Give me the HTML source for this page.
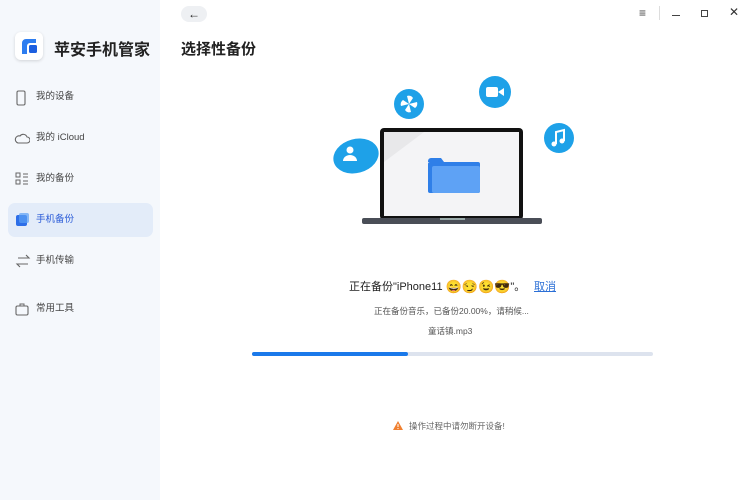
<!DOCTYPE html>
<html><head><meta charset="utf-8"><style>
*{margin:0;padding:0;box-sizing:border-box}
body{width:747px;height:500px;overflow:hidden;background:#fff;font-family:"Liberation Sans","Noto Sans CJK SC",sans-serif;position:relative;color:#222}
.side{position:absolute;left:0;top:0;width:160px;height:500px;background:#f5f8fc}
.logo{position:absolute;left:15px;top:32px;width:28px;height:28px;border-radius:6px;background:#fff;box-shadow:0 1px 3px rgba(0,0,0,.15)}
.app{position:absolute;left:54px;top:36px;font-size:16px;font-weight:bold;color:#222}
.nav{position:absolute;left:8px;width:145px;height:34px;border-radius:7px;font-size:9.5px;color:#444;padding-left:28px;line-height:34px}
.nav svg{position:absolute;left:7px;top:10px}
.sel{background:#e3ecf9;color:#2a5bd8}
.title{position:absolute;left:181px;top:38px;font-size:15px;font-weight:bold}
.back{position:absolute;left:181px;top:6px;width:26px;height:16px;border-radius:8px;background:#eef0f3;text-align:center;font-size:12px;line-height:16px}
.ctl{position:absolute;top:6px;font-size:12px;color:#444}
.emo{font-size:13px;vertical-align:-1px}
</style></head><body>
<div class="side">
<div class="logo"><svg width="28" height="28"><path d="M7 22V11a4 4 0 0 1 4-4h10v4h-6a3 3 0 0 0-3 3v8z" fill="#2d7df0"/><rect x="14" y="13" width="8" height="8" rx="1.5" fill="#1c5fe0"/></svg></div>
<div class="app">苹安手机管家</div>
<div class="nav" style="top:80px"><svg width="12" height="16"><rect x="2" y="1" width="8" height="14" rx="1.5" fill="none" stroke="#666" stroke-width="1.1"/></svg>我的设备</div>
<div class="nav" style="top:121px"><svg width="16" height="14" style="left:6px;top:11px"><path d="M4 11h9a3 3 0 0 0 0-6 4 4 0 0 0-7-1 3.5 3.5 0 0 0-2 7z" fill="none" stroke="#666" stroke-width="1.1"/></svg>我的 iCloud</div>
<div class="nav" style="top:162px"><svg width="14" height="14"><rect x="1" y="1" width="4" height="4" fill="none" stroke="#666"/><rect x="1" y="8" width="4" height="4" fill="none" stroke="#666"/><path d="M8 2h5M8 5h5M8 9h5M8 12h5" stroke="#666"/></svg>我的备份</div>
<div class="nav sel" style="top:203px"><svg width="14" height="14"><rect x="1" y="2" width="11" height="11" rx="2" fill="#2d6ee8"/><rect x="4" y="0" width="10" height="10" rx="2" fill="#5aa0f5" opacity=".7"/></svg>手机备份</div>
<div class="nav" style="top:244px"><svg width="16" height="14"><path d="M3 4h11l-3-3M13 10H2l3 3" fill="none" stroke="#666" stroke-width="1.1"/></svg>手机传输</div>
<div class="nav" style="top:292px"><svg width="14" height="14"><rect x="1" y="4" width="12" height="9" rx="1.5" fill="none" stroke="#666" stroke-width="1.1"/><path d="M5 4V2h4v2" fill="none" stroke="#666"/></svg>常用工具</div>
</div>
<div class="back">←</div>
<div class="title">选择性备份</div>
<div class="ctl" style="left:639px">≡</div>
<div style="position:absolute;left:659px;top:6px;width:1px;height:14px;background:#ddd"></div>
<div style="position:absolute;left:672px;top:15px;width:8px;height:1.3px;background:#444"></div>
<div style="position:absolute;left:701px;top:10px;width:7px;height:7px;border:1.3px solid #444"></div>
<div class="ctl" style="left:729px;top:5px;color:#333">✕</div>
<svg style="position:absolute;left:330px;top:75px" width="250" height="155">
<ellipse cx="26" cy="81" rx="23" ry="17" fill="#1ea1e8" transform="rotate(-15 26 81)"/>
<circle cx="20" cy="75" r="3.5" fill="#fff"/><path d="M13 86a7 6 0 0 1 14 0z" fill="#fff"/>
<circle cx="79" cy="29" r="15" fill="#1ea1e8"/>
<path d="M79 29l-2-8a5 5 0 0 1 6 2zM79 29l8-2a5 5 0 0 1-2 6zM79 29l2 8a5 5 0 0 1-6-2zM79 29l-8 2a5 5 0 0 1 2-6z" fill="#fff"/>
<circle cx="165" cy="17" r="16" fill="#1ea1e8"/>
<rect x="156" y="12" width="12" height="10" rx="2" fill="#fff"/><path d="M168 17l6-4v8z" fill="#fff"/>
<circle cx="229" cy="63" r="15" fill="#1ea1e8"/>
<path d="M226 69V57l8-2v11" fill="none" stroke="#fff" stroke-width="2"/><circle cx="224" cy="69" r="2.5" fill="#fff"/><circle cx="232" cy="66" r="2.5" fill="#fff"/>
<rect x="50" y="53" width="143" height="92" rx="4" fill="#111"/>
<rect x="54" y="57" width="135" height="84" fill="#f4f4f6"/>
<path d="M54 57h40l-40 30z" fill="#e8e8ea"/>
<rect x="32" y="143" width="180" height="6" rx="2" fill="#4a4e57"/>
<rect x="110" y="143" width="25" height="2" fill="#9aa"/>
<path d="M98 86a3 3 0 0 1 3-3h10l3 4h-16z" fill="#2f7fe8"/>
<rect x="98" y="87" width="52" height="31" rx="2" fill="#2f7fe8"/>
<rect x="102" y="91" width="48" height="27" rx="2" fill="#5ea2f5"/>
</svg>
<div style="position:absolute;left:349px;top:278px;font-size:11px;color:#222">正在备份"iPhone11 <span class="emo">😄😏😉😎</span>"。</div>
<div style="position:absolute;left:534px;top:278px;font-size:11px;color:#2b6fd6;text-decoration:underline">取消</div>
<div style="position:absolute;left:374px;top:305px;font-size:8.5px;color:#555">正在备份音乐，已备份20.00%，请稍候...</div>
<div style="position:absolute;left:428px;top:325px;font-size:8.5px;color:#555">童话镇.mp3</div>
<div style="position:absolute;left:252px;top:352px;width:401px;height:4px;border-radius:2px;background:#dde3ee"></div>
<div style="position:absolute;left:252px;top:352px;width:156px;height:4px;border-radius:2px;background:#1a79ea"></div>
<svg style="position:absolute;left:393px;top:421px" width="10" height="9"><path d="M5 0l5 9H0z" fill="#f08030"/><rect x="4.5" y="3" width="1" height="3" fill="#fff"/><rect x="4.5" y="7" width="1" height="1" fill="#fff"/></svg>
<div style="position:absolute;left:409px;top:420px;font-size:8.5px;color:#666">操作过程中请勿断开设备!</div>
</body></html>
